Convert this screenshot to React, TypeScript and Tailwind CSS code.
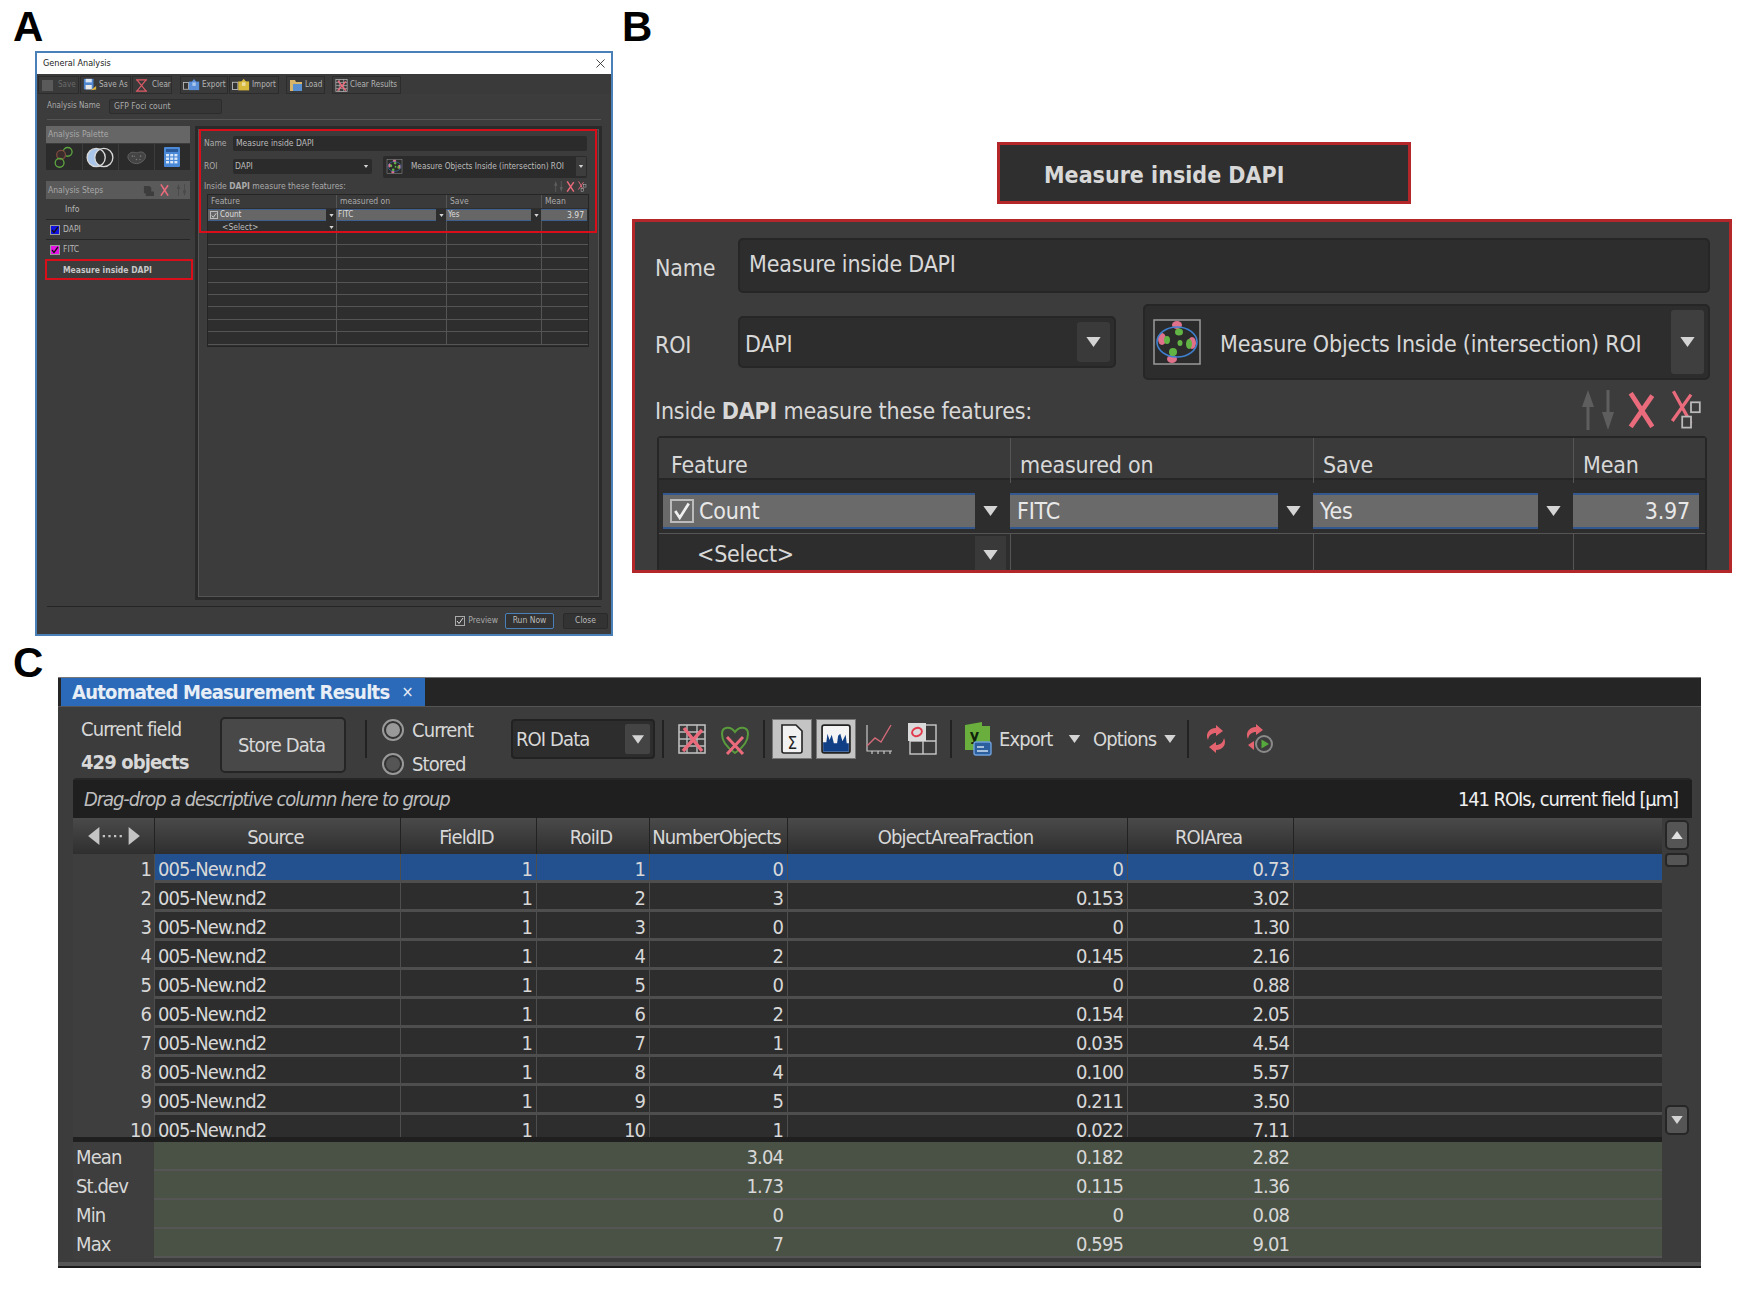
import type { ReactNode } from "react";

type IconProps = { className?: string };

const Arrow = ({ className = "w-2 h-1.5" }: IconProps) => (
  <svg viewBox="0 0 10 7" className={className}>
    <polygon points="0,0 10,0 5,7" fill="#d4d4d4" />
  </svg>
);

const RedX = ({ className }: IconProps) => (
  <svg viewBox="0 0 24 30" className={className} fill="none">
    <path d="M3 1 L21 29 M21 3 L3 29" stroke="#e96b7c" strokeWidth="4" />
  </svg>
);

const UpDown = ({ className }: IconProps) => (
  <svg viewBox="0 0 36 40" className={className} fill="currentColor">
    <path d="M8 0 L14 17 L9.5 17 L9.5 40 L6.5 40 L6.5 17 L2 17 Z" />
    <path d="M28 40 L22 22 L26.5 22 L26.5 0 L29.5 0 L29.5 22 L34 22 Z" />
  </svg>
);

const CopyX = ({ className }: IconProps) => (
  <svg viewBox="0 0 30 36" className={className} fill="none">
    <path d="M4 1 L20 30 M20 4 L3 28" stroke="#e96b7c" strokeWidth="3" />
    <rect x="20" y="11" width="8" height="9" stroke="#bbb" strokeWidth="1.6" fill="#3c3c3c" />
    <rect x="12" y="24" width="8" height="10" stroke="#bbb" strokeWidth="1.6" fill="#3c3c3c" />
  </svg>
);

const CellsIcon = ({ className }: IconProps) => (
  <svg viewBox="0 0 48 46" className={className}>
    <rect x="1" y="1" width="46" height="44" fill="#2b2b2b" stroke="#9a9a9a" strokeWidth="1.5" />
    <ellipse cx="9" cy="20" rx="4" ry="6" fill="#e0718a" />
    <ellipse cx="39" cy="24" rx="4" ry="6" fill="#e0718a" />
    <ellipse cx="24" cy="6" rx="5" ry="4" fill="#e0718a" />
    <ellipse cx="19" cy="40" rx="5" ry="4" fill="#e0718a" />
    <ellipse cx="24" cy="23" rx="20" ry="15" fill="none" stroke="#3f7fd0" strokeWidth="1.6" />
    <ellipse cx="14" cy="21" rx="3" ry="4" fill="#62b544" />
    <ellipse cx="26" cy="13" rx="4" ry="3.5" fill="#62b544" />
    <ellipse cx="27" cy="24" rx="2.5" ry="3" fill="#62b544" />
    <ellipse cx="36" cy="25" rx="3" ry="5" fill="#62b544" />
    <ellipse cx="20" cy="33" rx="4" ry="4" fill="#62b544" />
  </svg>
);

const Floppy = ({ className }: IconProps) => (
  <svg viewBox="0 0 16 16" className={className}>
    <rect x="1" y="1" width="11" height="12" fill="#4f86d0" />
    <rect x="3" y="1" width="7" height="4" fill="#d8e4f2" />
    <rect x="3" y="8" width="7" height="5" fill="#e8e8e8" />
    <path d="M9 14 L15 9 L15 13 Z" fill="#e2b33c" />
  </svg>
);

const BoxX = ({ className }: IconProps) => (
  <svg viewBox="0 0 14 14" className={className} fill="none">
    <path d="M1 1 H13 M1 13 H13 M2 1 L12 13 M12 1 L2 13" stroke="#e05a66" strokeWidth="1.2" />
  </svg>
);

const PortIcon = ({ tone, className }: IconProps & { tone: string }) => (
  <svg viewBox="0 0 20 14" className={className}>
    <rect x="0.5" y="4" width="6" height="8" fill="#333" stroke="#bbb" />
    <rect x="7" y="3" width="12" height="10" fill={tone} />
    <path d="M13 0 L17 5 L9 5 Z" fill={tone} />
    <rect x="11" y="4" width="4" height="4" fill="#fff" opacity="0.5" />
  </svg>
);

const Folder = ({ className }: IconProps) => (
  <svg viewBox="0 0 14 14" className={className}>
    <path d="M1 2 H6 L7 4 H13 V13 H1 Z" fill="#d9b56a" />
    <rect x="4" y="6" width="9" height="7" fill="#5a8fd0" />
  </svg>
);

const GridX = ({ className }: IconProps) => (
  <svg viewBox="0 0 28 30" className={className} fill="none">
    <rect x="1" y="1" width="26" height="28" fill="#3b3b3b" stroke="#bdbdbd" strokeWidth="1.6" />
    <path d="M1 8 H27 M1 15 H27 M1 22 H27 M9 1 V29 M19 1 V29" stroke="#bdbdbd" strokeWidth="1.4" />
    <path d="M6 4 L24 27 M24 6 L5 27" stroke="#e96b7c" strokeWidth="3.4" />
  </svg>
);

const HeartX = ({ className }: IconProps) => (
  <svg viewBox="0 0 30 32" className={className} fill="none">
    <path d="M15 9 C11 3 2 3 2 11 C2 19 9 26 15 30 C21 26 28 19 28 11 C28 3 19 3 15 9 Z" stroke="#5a9b3c" strokeWidth="2" />
    <path d="M7 14 L23 31 M23 14 L7 31" stroke="#e96b7c" strokeWidth="3" />
  </svg>
);

const FileSigma = ({ className }: IconProps) => (
  <svg viewBox="0 0 24 30" className={className}>
    <path d="M2 1 H16 L22 7 V27 Q22 29 20 29 H4 Q2 29 2 27 Z" fill="#f2f2f2" stroke="#222" strokeWidth="1.6" />
    <text x="12" y="25" textAnchor="middle" fontSize="17" fill="#222" fontFamily="DejaVu Sans, sans-serif">Σ</text>
  </svg>
);

const Histogram = ({ className }: IconProps) => (
  <svg viewBox="0 0 28 28" className={className}>
    <rect x="1" y="1" width="26" height="26" rx="2" fill="#f4f4f4" stroke="#222" strokeWidth="1.6" />
    <path d="M2 26 V17 L5 17 L6 9 L8 15 L10 10 L12 18 L15 18 L16 11 L18 9 L20 16 L23 10 L24 18 L26 18 V26 Z" fill="#103f86" />
  </svg>
);

const LineIcon = ({ className }: IconProps) => (
  <svg viewBox="0 0 28 30" className={className} fill="none">
    <path d="M2 1 V27 H27 M7 27 V30 M13 27 V30 M19 27 V30 M25 27 V30" stroke="#c8c8c8" strokeWidth="1.2" />
    <path d="M2 22 L10 14 L16 18 L26 1" stroke="#d26a78" strokeWidth="1.4" />
  </svg>
);

const GridO = ({ className }: IconProps) => (
  <svg viewBox="0 0 30 32" className={className} fill="none">
    <rect x="3" y="2" width="26" height="29" fill="#3a3a3a" stroke="#c8c8c8" strokeWidth="1.4" />
    <path d="M16 2 V31 M3 18 H29" stroke="#c8c8c8" strokeWidth="1.4" />
    <rect x="1" y="0" width="18" height="18" fill="#dadada" />
    <ellipse cx="10" cy="9" rx="5" ry="4" stroke="#e23a4d" strokeWidth="2" transform="rotate(-25 10 9)" />
  </svg>
);

const Excel = ({ className }: IconProps) => (
  <svg viewBox="0 0 28 34" className={className}>
    <path d="M1 3 L18 0 V28 L1 28 Z" fill="#6aaf3e" />
    <rect x="18" y="4" width="8" height="22" fill="#6aaf3e" />
    <text x="10" y="19" textAnchor="middle" fontSize="16" fontWeight="700" fill="#10240a" fontFamily="DejaVu Sans, sans-serif">y</text>
    <rect x="10" y="20" width="17" height="13" rx="2" fill="#2b5f9e" stroke="#6ea0dc" strokeWidth="1.4" />
    <path d="M13 25 H20 M13 29 H24" stroke="#cfe0f2" strokeWidth="1.4" />
  </svg>
);

const Refresh = ({ className }: IconProps) => (
  <svg viewBox="0 0 22 32" className={className} fill="none">
    <path d="M11 2 L18 8 L11 13 L11 10 C7 10 4 12 3 17 C0 11 4 5 11 5 Z" fill="#e5636f" />
    <path d="M11 30 L4 24 L11 19 L11 22 C15 22 18 20 19 15 C22 21 18 27 11 27 Z" fill="#e5636f" />
  </svg>
);

const RefreshPlay = ({ className }: IconProps) => (
  <svg viewBox="0 0 28 32" className={className} fill="none">
    <path d="M11 1 L18 7 L11 12 L11 9 C7 9 4 11 3 16 C0 10 4 4 11 4 Z" fill="#e5636f" />
    <path d="M9 27 L3 22 L9 18 Z" fill="#e5636f" />
    <circle cx="19" cy="21" r="8" fill="#3c3c3c" stroke="#8a8a8a" strokeWidth="2" />
    <polygon points="16.5,16.5 24,21 16.5,25.5" fill="#56a93c" />
  </svg>
);

const Circles = ({ className }: IconProps) => (
  <svg viewBox="0 0 30 30" className={className} fill="none" strokeWidth="1.8">
    <circle cx="20" cy="8" r="6" stroke="#5da53f" />
    <circle cx="11" cy="12" r="6" stroke="#7e4a40" fill="#3a2c2a" />
    <circle cx="9" cy="23" r="6" stroke="#5da53f" />
  </svg>
);

const Venn = ({ className }: IconProps) => (
  <svg viewBox="0 0 30 22" className={className} fill="none">
    <circle cx="11" cy="11" r="9.5" fill="#a9c6ea" />
    <path d="M15 2.5 A9.5 9.5 0 0 0 15 19.5 A9.5 9.5 0 0 0 15 2.5" fill="#2d2d2d" />
    <circle cx="19" cy="11" r="9.5" stroke="#d8d8d8" strokeWidth="1.4" />
    <circle cx="11" cy="11" r="9.5" stroke="#d8d8d8" strokeWidth="1.4" />
  </svg>
);

const Blob = ({ className }: IconProps) => (
  <svg viewBox="0 0 30 22" className={className} fill="none">
    <path d="M3 7 C8 1 12 4 15 4 C18 4 24 0 28 7 C30 13 22 20 15 20 C8 20 0 14 3 7 Z" fill="#444" stroke="#6a6a6a" strokeWidth="1.2" />
    <circle cx="9" cy="9" r="1.2" fill="#777" />
    <circle cx="15" cy="14" r="1.2" fill="#777" />
    <circle cx="21" cy="9" r="1.2" fill="#777" />
    <circle cx="12" cy="9" r="1" fill="#777" />
    <circle cx="20" cy="14" r="1" fill="#777" />
  </svg>
);

const Calculator = ({ className }: IconProps) => (
  <svg viewBox="0 0 16 20" className={className}>
    <rect width="16" height="20" rx="1" fill="#4a88d8" />
    <rect x="2" y="2" width="12" height="3" fill="#2a5a9a" />
    {[7, 10.5, 14].map((y) =>
      [2, 6.2, 10.4].map((x) => <rect key={`${x}-${y}`} x={x} y={y} width="3" height="2.4" fill="#dbe8f8" />),
    )}
  </svg>
);

// ---- panel A ----

function ToolBtn({ w, ml, icon, label, dim }: { w: string; ml?: string; icon: ReactNode; label: string; dim?: boolean }) {
  return (
    <div className={`${w} ${ml ?? ""} flex h-[18px] items-center gap-[2px] border border-[#2c2c2c] bg-[#3a3a3a] pl-[2px] text-[8px] whitespace-nowrap ${dim ? "text-[#6b6b6b]" : "text-[#b4b4b4]"}`}>
      {icon}
      <span>{label}</span>
    </div>
  );
}

function StepRow({ swatch, label }: { swatch?: string; label: string }) {
  return (
    <div className="flex h-5 items-center border-b border-[#262626] pl-[1px] text-[#b8b8b8]">
      {swatch ? (
        <span className={`mr-[3px] ml-[3px] flex h-[10px] w-[10px] items-center justify-center border border-[#9a9a9a] ${swatch}`}>
          <svg viewBox="0 0 8 8" className="h-2 w-2" fill="none">
            <path d="M1 4 L3 6.5 L7 1" stroke="#111" strokeWidth="1.3" />
          </svg>
        </span>
      ) : (
        <span className="w-[18px]" />
      )}
      {label}
    </div>
  );
}

function SmallCombo({ w, label, check }: { w: string; label: string; check?: boolean }) {
  return (
    <div className={`${w} flex h-[12px] items-center justify-between`}>
      <div className="flex h-full flex-1 items-center gap-[2px] border-y border-[#3f5f8f] bg-[#666] pl-[2px] text-[8px] text-[#ddd]">
        {check && (
          <span className="flex h-[8px] w-[8px] items-center justify-center border border-[#bbb]">
            <svg viewBox="0 0 8 8" className="h-[7px] w-[7px]" fill="none">
              <path d="M1 4 L3 6.5 L7 1" stroke="#eee" strokeWidth="1" />
            </svg>
          </span>
        )}
        {label}
      </div>
      <div className="flex h-full w-[10px] items-center justify-center bg-[#2d2d2d]">
        <Arrow className="h-[3px] w-[5px]" />
      </div>
    </div>
  );
}

function PanelA() {
  return (
    <div className="ml-[22px] flex h-[585px] w-[578px] flex-col border-2 border-t-[2px] border-[#4a80b8] bg-[#3c3c3c] text-[8.5px]">
      <div className="flex h-[21px] items-center justify-between bg-white pr-[6px] pl-[6px] text-[9px] text-[#222]">
        <span>General Analysis</span>
        <svg viewBox="0 0 10 10" className="h-[9px] w-[9px]" fill="none">
          <path d="M0.5 0.5 L9.5 9.5 M9.5 0.5 L0.5 9.5" stroke="#333" strokeWidth="1" />
        </svg>
      </div>
      <div className="flex h-[20px] items-end bg-[#3a3a3a] pl-[1px]">
        <ToolBtn w="w-[41px]" dim label="Save" icon={<span className="mr-[3px] ml-[1px] h-[11px] w-[11px] bg-[#5a5a5a]" />} />
        <ToolBtn w="w-[51px]" ml="ml-[1px]" label="Save As" icon={<Floppy className="h-[14px] w-[14px]" />} />
        <ToolBtn w="w-[40px]" ml="ml-[1px]" label="Clear" icon={<BoxX className="mr-[2px] h-[13px] w-[13px]" />} />
        <ToolBtn w="w-[48px]" ml="ml-[8px]" label="Export" icon={<PortIcon tone="#5a8fd8" className="h-[14px] w-[17px]" />} />
        <ToolBtn w="w-[50px]" ml="ml-[1px]" label="Import" icon={<PortIcon tone="#d8b93c" className="h-[14px] w-[18px]" />} />
        <ToolBtn w="w-[39px]" ml="ml-[7px]" label="Load" icon={<Folder className="h-[14px] w-[14px]" />} />
        <ToolBtn w="w-[69px]" ml="ml-[7px]" label="Clear Results" icon={<GridX className="h-[13px] w-[13px]" />} />
      </div>
      <div className="flex h-[24px] items-center pl-[10px] text-[#aaa]">
        <span className="w-[62px] text-[8px]">Analysis Name</span>
        <div className="flex h-[15px] w-[113px] items-center rounded-[2px] border border-[#2c2c2c] bg-[#363636] pl-[4px]">GFP Foci count</div>
      </div>
      <div className="mx-[10px] mt-[1px] h-px bg-[#555]" />
      <div className="mt-[6px] flex h-[474px]">
        <div className="relative ml-[9px] w-[144px] text-[8.5px]">
          <div className="flex h-[17px] items-center bg-[#666] pl-[2px] text-[#a8a8a8]">Analysis Palette</div>
          <div className="mt-px flex h-[26px] gap-px bg-[#3c3c3c]">
            <div className="flex w-[36px] items-center justify-center bg-[#2b2b2b]">
              <Circles className="h-[22px] w-[22px]" />
            </div>
            <div className="flex w-[36px] items-center justify-center bg-[#2b2b2b]">
              <Venn className="h-[21px] w-[30px]" />
            </div>
            <div className="flex w-[35px] items-center justify-center bg-[#2b2b2b]">
              <Blob className="h-[15px] w-[21px]" />
            </div>
            <div className="flex w-[36px] items-center justify-center bg-[#2b2b2b]">
              <Calculator className="h-[20px] w-[16px]" />
            </div>
          </div>
          <div className="mt-[11px] mb-px flex h-[18px] items-center justify-between bg-[#5a5a5a] px-[2px] text-[#a8a8a8]">
            <span>Analysis Steps</span>
            <span className="flex items-center gap-[5px]">
              <svg viewBox="0 0 12 12" className="h-[11px] w-[11px]">
                <path d="M1 1 H7 L9 3 V7 H12 V12 H3 V9 H1 Z" fill="#3d3d3d" />
              </svg>
              <RedX className="h-[12px] w-[11px]" />
              <UpDown className="h-[12px] w-[13px] text-[#4a4a4a]" />
            </span>
          </div>
          <StepRow label="Info" />
          <StepRow label="DAPI" swatch="bg-[#1212e0]" />
          <StepRow label="FITC" swatch="bg-[#e612e6]" />
          <div className="flex h-5 items-center pl-[17px] font-bold text-[#c8c8c8]">Measure inside DAPI</div>
          <div className="absolute top-[133px] -left-[1px] h-[21px] w-[148px] border-2 border-[#d80f1a]" />
        </div>
        <div className="relative ml-[5px] h-[474px] w-[407px] border-[3px] border-[#2a2a2a] bg-[#3c3c3c]">
          <div className="h-full border border-[#555] pt-[6px] pl-[5px]">
            <div className="flex h-[15px] items-center text-[#aaa]">
              <span className="w-[29px]">Name</span>
              <div className="flex h-[15px] w-[354px] items-center rounded-[2px] bg-[#2b2b2b] pl-[3px] text-[#bbb]">Measure inside DAPI</div>
            </div>
            <div className="mt-[4px] flex h-[23px] items-center text-[#aaa]">
              <span className="w-[29px]">ROI</span>
              <div className="flex h-[15px] w-[139px] items-center justify-between rounded-[2px] bg-[#2b2b2b] pr-[3px] pl-[2px] text-[#bbb]">
                DAPI
                <Arrow className="h-[3px] w-[6px]" />
              </div>
              <div className="ml-[11px] flex h-[22px] w-[204px] items-center rounded-[2px] bg-[#2b2b2b] pl-[3px] text-[#bbb]">
                <CellsIcon className="h-[15px] w-[17px]" />
                <span className="ml-[8px] flex-1 text-[8.2px]">Measure Objects Inside (intersection) ROI</span>
                <div className="mr-[1px] flex h-[19px] w-[10px] items-center justify-center bg-[#3d3d3d]">
                  <Arrow className="h-[3px] w-[6px]" />
                </div>
              </div>
            </div>
            <div className="mt-[1px] flex h-[14px] w-[385px] items-center justify-between pr-[2px] text-[#aaa]">
              <span>
                Inside <b>DAPI</b> measure these features:
              </span>
              <span className="flex items-center gap-[2px] text-[#5e5e5e]">
                <UpDown className="h-[11px] w-[11px]" />
                <RedX className="h-[11px] w-[9px]" />
                <CopyX className="h-[11px] w-[10px]" />
              </span>
            </div>
            <div className="mt-px ml-[3px] h-[153px] w-[382px] overflow-hidden border border-[#252525] bg-[#2e2e2e]">
              <div className="grid h-[13px] grid-cols-[128px_110px_95px_49px] bg-[#3a3a3a] text-[#aaa]">
                <span className="pl-[3px]">Feature</span>
                <span className="border-l border-[#555] pl-[3px]">measured on</span>
                <span className="border-l border-[#555] pl-[3px]">Save</span>
                <span className="border-l border-[#555] pl-[3px]">Mean</span>
              </div>
              <div className="flex h-[13px] items-center pt-px">
                <SmallCombo w="w-[128px]" label="Count" check />
                <SmallCombo w="w-[110px]" label="FITC" />
                <SmallCombo w="w-[95px]" label="Yes" />
                <div className="flex h-[12px] w-[46px] items-center justify-end border-y border-[#3f5f8f] bg-[#666] pr-[3px] text-[#ddd]">3.97</div>
              </div>
              <div className="grid h-[12px] grid-cols-[128px_110px_95px_49px] border-b border-[#555] text-[#bbb]">
                <span className="flex items-center justify-between pl-[14px]">
                  &lt;Select&gt;
                  <span className="flex h-full w-[10px] items-center justify-center bg-[#2d2d2d]">
                    <Arrow className="h-[3px] w-[5px]" />
                  </span>
                </span>
                <span className="border-l border-[#555]" />
                <span className="border-l border-[#555]" />
                <span className="border-l border-[#555]" />
              </div>
              {[0, 1, 2, 3, 4, 5, 6, 7, 8].map((i) => (
                <div key={i} className="grid h-[12.4px] grid-cols-[128px_110px_95px_49px] border-b border-[#555]">
                  <span />
                  <span className="border-l border-[#555]" />
                  <span className="border-l border-[#555]" />
                  <span className="border-l border-[#555]" />
                </div>
              ))}
            </div>
          </div>
          <div className="absolute top-0 left-[1px] h-[104px] w-[398px] border-2 border-[#d80f1a]" />
        </div>
      </div>
      <div className="mx-[10px] mt-[6px] h-px bg-[#252525]" />
      <div className="flex flex-1 items-center justify-end pr-[3px] text-[#aaa]">
        <span className="flex h-[10px] w-[10px] items-center justify-center border border-[#aaa]">
          <svg viewBox="0 0 8 8" className="h-2 w-2" fill="none">
            <path d="M1 4 L3 6.5 L7 1" stroke="#ddd" strokeWidth="1" />
          </svg>
        </span>
        <span className="ml-[3px]">Preview</span>
        <div className="ml-[7px] flex h-[16px] w-[49px] items-center justify-center rounded-[2px] border border-[#4a80b8] bg-[#333] text-[#bbb]">Run Now</div>
        <div className="ml-[9px] flex h-[16px] w-[45px] items-center justify-center rounded-[2px] border border-[#2a2a2a] bg-[#333] text-[#bbb]">Close</div>
      </div>
    </div>
  );
}

// ---- panel B ----

function BigCombo({ w, label, check }: { w: string; label: string; check?: boolean }) {
  return (
    <div className={`${w} flex h-[40px] items-center`}>
      <div className="flex h-[36px] min-w-0 flex-1 items-center gap-[5px] border-y-2 border-[#33578f] bg-[#6a6a6a] pl-[7px] text-[#e8e8e8]">
        {check && (
          <span className="flex h-[24px] w-[24px] items-center justify-center border-2 border-[#bbb]">
            <svg viewBox="0 0 12 12" className="h-[18px] w-[18px]" fill="none">
              <path d="M1.5 6 L4.5 10.5 L10.5 1" stroke="#f0f0f0" strokeWidth="1.8" />
            </svg>
          </span>
        )}
        {label}
      </div>
      <div className="mr-[4px] flex h-[38px] w-[31px] items-center justify-center rounded-[2px] bg-[#2d2d2d]">
        <Arrow className="h-[10px] w-[15px]" />
      </div>
    </div>
  );
}

function PanelB() {
  return (
    <div className="ml-[10px] flex h-[354px] w-[1100px] flex-col overflow-hidden border-[3px] border-[#b3262a] bg-[#3c3c3c] pt-[16px] pl-[20px] text-[23px] tracking-[-0.2px] text-[#d8d8d8]">
      <div className="flex h-[55px] items-center">
        <span className="w-[83px] pt-[6px]">Name</span>
        <div className="h-[55px] w-[972px] rounded-[5px] border-2 border-[#262626] bg-[#2d2d2d] pt-[7px] pl-[9px]">Measure inside DAPI</div>
      </div>
      <div className="mt-[11px] flex h-[76px] items-center">
        <span className="w-[83px] pt-[6px]">ROI</span>
        <div className="flex h-[52px] w-[378px] items-center justify-between rounded-[5px] border-2 border-[#262626] bg-[#2d2d2d] pr-[4px] pl-[5px]">
          <span className="pt-[5px]">DAPI</span>
          <div className="flex h-[40px] w-[33px] items-center justify-center rounded-[3px] bg-[#3a3a3a]">
            <Arrow className="h-[10px] w-[15px]" />
          </div>
        </div>
        <div className="ml-[27px] flex h-[76px] w-[567px] items-center rounded-[5px] border-2 border-[#262626] bg-[#2d2d2d] pl-[8px]">
          <CellsIcon className="h-[46px] w-[48px]" />
          <span className="ml-[19px] flex-1 pt-[5px]">Measure Objects Inside (intersection) ROI</span>
          <div className="mr-[4px] flex h-[64px] w-[33px] items-center justify-center rounded-[3px] bg-[#3f3f3f]">
            <Arrow className="h-[10px] w-[15px]" />
          </div>
        </div>
      </div>
      <div className="mt-[10px] flex h-[41px] w-[1047px] items-center justify-between">
        <span className="pt-[2px]">
          Inside <b>DAPI</b> measure these features:
        </span>
        <span className="flex items-center text-[#5e5e5e]">
          <UpDown className="h-[40px] w-[36px]" />
          <RedX className="ml-[9px] h-[36px] w-[33px]" />
          <CopyX className="ml-[11px] h-[40px] w-[33px]" />
        </span>
      </div>
      <div className="mt-[6px] ml-[2px] w-[1050px] flex-1 rounded-t-[4px] border-2 border-b-0 border-[#262626] bg-[#2d2d2d]">
        <div className="grid h-[42px] grid-cols-[351px_303px_260px_1fr] items-center border-b-2 border-[#262626] bg-[#3a3a3a]">
          <span className="h-full pt-[10px] pl-[12px]">Feature</span>
          <span className="h-full border-l border-[#555] pt-[10px] pl-[9px]">measured on</span>
          <span className="h-full border-l border-[#555] pt-[10px] pl-[9px]">Save</span>
          <span className="h-full border-l border-[#555] pt-[10px] pl-[9px]">Mean</span>
        </div>
        <div className="mt-[11px] flex h-[40px] items-center pl-[4px]">
          <BigCombo w="w-[347px]" label="Count" check />
          <BigCombo w="w-[303px]" label="FITC" />
          <BigCombo w="w-[260px]" label="Yes" />
          <div className="flex h-[36px] w-[126px] items-center justify-end border-y-2 border-[#33578f] bg-[#6a6a6a] pr-[9px] text-[#e8e8e8]">3.97</div>
        </div>
        <div className="mt-[2px] grid h-[40px] grid-cols-[351px_303px_260px_1fr] border-t border-[#555]">
          <span className="flex items-center justify-between pt-[2px] pl-[38px]">
            &lt;Select&gt;
            <span className="mr-[4px] flex h-full w-[31px] items-center justify-center bg-[#393939]">
              <Arrow className="h-[10px] w-[15px]" />
            </span>
          </span>
          <span className="border-l border-[#555]" />
          <span className="border-l border-[#555]" />
          <span className="border-l border-[#555]" />
        </div>
      </div>
    </div>
  );
}

// ---- panel C ----

const rows = [
  ["1", "1", "1", "0", "0", "0.73"],
  ["2", "1", "2", "3", "0.153", "3.02"],
  ["3", "1", "3", "0", "0", "1.30"],
  ["4", "1", "4", "2", "0.145", "2.16"],
  ["5", "1", "5", "0", "0", "0.88"],
  ["6", "1", "6", "2", "0.154", "2.05"],
  ["7", "1", "7", "1", "0.035", "4.54"],
  ["8", "1", "8", "4", "0.100", "5.57"],
  ["9", "1", "9", "5", "0.211", "3.50"],
  ["10", "1", "10", "1", "0.022", "7.11"],
];

const summary = [
  ["Mean", "3.04", "0.182", "2.82"],
  ["St.dev", "1.73", "0.115", "1.36"],
  ["Min", "0", "0", "0.08"],
  ["Max", "7", "0.595", "9.01"],
];

const COLS = "grid grid-cols-[81px_246px_136px_113px_138px_340px_166px_369px]";

function ToolSep({ ml }: { ml: string }) {
  return <div className={`${ml} h-[38px] w-[2px] bg-[#222]`} />;
}

function PanelC() {
  return (
    <div className="ml-[58px] flex h-[591px] w-[1643px] flex-col bg-[#3c3c3c] text-[20px] tracking-[-0.9px] text-[#d8d8d8]">
      <div className="flex h-[29px] items-end border-t border-[#777] bg-[#252525] pl-[3px]">
        <div className="flex h-[28px] w-[364px] items-center bg-[#2a6ab8] pl-[11px] font-bold tracking-[-0.75px] whitespace-nowrap text-[#e8eef6]">
          Automated Measurement Results
          <span className="ml-[12px] text-[16px] font-normal">×</span>
        </div>
      </div>
      <div className="flex h-[71px] items-center border-t border-[#555] pb-[6px] pl-[23px]">
        <div className="mt-[12px] flex w-[139px] flex-col gap-[7px] leading-[26px]">
          <span>Current field</span>
          <b>429 objects</b>
        </div>
        <div className="mt-[12px] flex h-[56px] w-[126px] items-center justify-center rounded-[5px] border-2 border-[#252525] bg-[#484848] pr-[3px]">Store Data</div>
        <ToolSep ml="ml-[19px]" />
        <div className="mt-[16px] ml-[15px] flex w-[129px] flex-col gap-[8px]">
          <span className="flex h-[26px] items-center gap-[8px]">
            <span className="flex h-[22px] w-[22px] items-center justify-center rounded-full border-2 border-[#999] bg-[#333]">
              <span className="h-[14px] w-[14px] rounded-full bg-[#999]" />
            </span>
            Current
          </span>
          <span className="flex h-[26px] items-center gap-[8px]">
            <span className="flex h-[22px] w-[22px] items-center justify-center rounded-full border-2 border-[#999] bg-[#333]">
              <span className="h-[14px] w-[14px] rounded-full bg-[#555]" />
            </span>
            Stored
          </span>
        </div>
        <div className="flex h-[40px] w-[144px] items-center justify-between rounded-[4px] border-2 border-[#222] bg-[#2d2d2d] pr-[3px] pl-[3px]">
          ROI Data
          <div className="flex h-[30px] w-[25px] items-center justify-center rounded-[2px] bg-[#444]">
            <Arrow className="h-[9px] w-[12px]" />
          </div>
        </div>
        <ToolSep ml="ml-[7px]" />
        <GridX className="ml-[14px] h-[30px] w-[28px]" />
        <HeartX className="ml-[14px] h-[32px] w-[30px]" />
        <ToolSep ml="ml-[13px]" />
        <div className="ml-[7px] flex h-[40px] w-[40px] items-center justify-center border border-[#777] bg-[#c4c4c4]">
          <FileSigma className="h-[30px] w-[24px]" />
        </div>
        <div className="ml-[4px] flex h-[40px] w-[40px] items-center justify-center border border-[#777] bg-[#c4c4c4]">
          <Histogram className="h-[30px] w-[30px]" />
        </div>
        <LineIcon className="ml-[9px] h-[30px] w-[28px]" />
        <GridO className="ml-[14px] h-[32px] w-[30px]" />
        <ToolSep ml="ml-[13px]" />
        <Excel className="ml-[12px] h-[34px] w-[28px]" />
        <span className="ml-[7px] w-[57px]">Export</span>
        <Arrow className="ml-[12px] h-[8px] w-[13px]" />
        <span className="ml-[12px] w-[63px]">Options</span>
        <Arrow className="ml-[8px] h-[8px] w-[12px]" />
        <ToolSep ml="ml-[11px]" />
        <Refresh className="ml-[16px] h-[32px] w-[22px]" />
        <RefreshPlay className="ml-[18px] h-[32px] w-[28px]" />
      </div>
      <div className="mt-[1px] ml-[15px] w-[1619px] rounded-t-[4px] border-t-2 border-[#262626]">
        <div className="flex h-[38px] items-center justify-between bg-[#1f1f1f] pr-[14px] pl-[11px] tracking-[-1.1px]">
          <i className="text-[#bdbdbd]">Drag-drop a descriptive column here to group</i>
          <span className="text-[#f0f0f0]">141 ROIs, current field [µm]</span>
        </div>
        <div className="flex">
          <div className="w-[1589px]">
            <div className={`${COLS} h-[36px] items-stretch bg-gradient-to-b from-[#4a4a4a] to-[#2f2f2f] text-center`}>
              <span className="flex items-center justify-center">
                <svg viewBox="0 0 46 16" className="h-[18px] w-[52px]">
                  <polygon points="0,8 10,0 10,16" fill="#c4c4c4" />
                  <polygon points="46,8 36,0 36,16" fill="#c4c4c4" />
                  <path d="M13 8 H33" stroke="#c4c4c4" strokeWidth="2" strokeDasharray="2 3" />
                </svg>
              </span>
              {["Source", "FieldID", "RoiID", "NumberObjects", "ObjectAreaFraction", "ROIArea", ""].map((h, i) => (
                <span key={i} className="flex items-center justify-center border-l border-[#222] pt-[1px] pr-[4px]">
                  {h}
                </span>
              ))}
            </div>
            <div className="h-[283px] overflow-hidden">
              {rows.map((r, i) => (
                <div key={r[0]} className={`${COLS} h-[29px] border-b-[3px] border-[#4e4e4e] ${i === 0 ? "bg-[#23508f]" : "bg-[#2d2d2d]"}`}>
                  <span className="flex items-center justify-end bg-[#3e3e3e] pr-[3px]">{r[0]}</span>
                  <span className="flex items-center border-l border-[#4e4e4e] pl-[3px]">005-New.nd2</span>
                  {r.slice(1).map((c, j) => (
                    <span key={j} className="flex items-center justify-end border-l border-[#4e4e4e] pr-[4px]">
                      {c}
                    </span>
                  ))}
                  <span className="border-l border-[#4e4e4e]" />
                </div>
              ))}
            </div>
            <div className="h-[5px] bg-[#1f1f1f]" />
            {summary.map((r) => (
              <div key={r[0]} className={`${COLS} h-[29px] border-b-[2px] border-[#555] bg-[#4a5246]`}>
                <span className="flex items-center bg-[#3e3e3e] pl-[3px]">{r[0]}</span>
                <span />
                <span />
                <span />
                {r.slice(1).map((c, j) => (
                  <span key={j} className="flex items-center justify-end pr-[4px]">
                    {c}
                  </span>
                ))}
                <span />
              </div>
            ))}
          </div>
          <div className="flex w-[30px] flex-col items-center pt-[2px]">
            <div className="flex h-[30px] w-[24px] items-center justify-center rounded-[5px] border-2 border-[#262626] bg-[#555]">
              <svg viewBox="0 0 10 7" className="h-[8px] w-[12px]">
                <polygon points="0,7 10,7 5,0" fill="#e0e0e0" />
              </svg>
            </div>
            <div className="mt-[3px] h-[14px] w-[24px] rounded-[4px] border-2 border-[#262626] bg-[#555]" />
            <div className="mt-[238px] flex h-[30px] w-[24px] items-center justify-center rounded-[5px] border-2 border-[#262626] bg-[#555]">
              <Arrow className="h-[8px] w-[12px]" />
            </div>
          </div>
        </div>
      </div>
      <div className="mt-auto h-[6px] border-b-2 border-[#1a1a1a] bg-[#555]" />
    </div>
  );
}

export default function App() {
  return (
    <div className="h-[1298px] w-[1741px] overflow-hidden bg-white [font-family:'DejaVu_Sans',sans-serif] [font-stretch:condensed]">
      <div className="flex h-[646px]">
        <div className="w-[622px] shrink-0 pl-[13px]">
          <div className="h-[51px] pt-[6px] [font-family:'Liberation_Sans',sans-serif] text-[42px] leading-[42px] font-bold [font-stretch:normal]">A</div>
          <PanelA />
        </div>
        <div className="flex-1">
          <div className="h-[142px] pt-[6px] [font-family:'Liberation_Sans',sans-serif] text-[42px] leading-[42px] font-bold [font-stretch:normal]">B</div>
          <div className="ml-[375px] flex h-[62px] w-[414px] items-center border-[3px] border-[#b3262a] bg-[#2f2f2f] pt-[5px] pl-[44px] text-[23px] font-bold text-[#d8d8d8]">
            Measure inside DAPI
          </div>
          <div className="h-[15px]" />
          <PanelB />
        </div>
      </div>
      <div className="h-[31px] pl-[13px] [font-family:'Liberation_Sans',sans-serif] text-[42px] leading-[34px] font-bold [font-stretch:normal]">C</div>
      <PanelC />
    </div>
  );
}
